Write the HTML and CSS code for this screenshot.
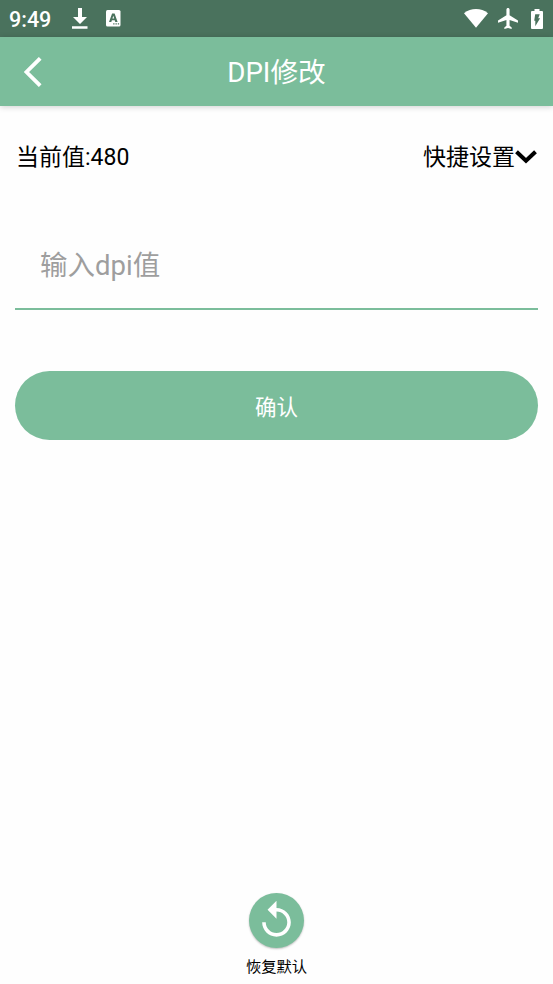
FILE: index.html
```html
<!DOCTYPE html>
<html lang="zh-CN">
<head>
  <meta charset="UTF-8">
  <meta name="viewport" content="width=device-width, initial-scale=1">
  <title>DPI修改</title>
  <link rel="stylesheet" href="styles.css">
</head>
<body>

  <div class="status-bar">
    <span class="time">9:49</span>
    <svg class="download" width="16" height="22" viewBox="0 0 16 22">
      <path d="M6 0h4v9h5l-7 7-7-7h5zM0 18.300h15.500v2.400H0z"/>
    </svg>
    <svg class="keyboard" width="15" height="17" viewBox="0 0 15 17">
      <rect width="14.500" height="16.500" rx="1.500"/>
      <path class="cutout" fill-rule="evenodd" d="M6.100 3.500h2.500l3 8.500H9.300l-.6-1.800H5.900L5.300 12H3zM7.300 5.700l-.9 2.900h1.800zM7.200 13.200h1.300v1.300H7.200zM9.500 13.200h1.300v1.300H9.500zM11.800 13.200h1.300v1.300h-1.300z"/>
    </svg>
    <div class="status-right">
      <svg width="24" height="19" viewBox="0 0 24 19">
        <path d="M0 4.200C7-1.400 17-1.400 24 4.200L12 18.700z"/>
      </svg>
      <svg width="20" height="21" viewBox="2 2 19 20">
        <path d="M21 16v-2l-8-5V3.500c0-.83-.67-1.500-1.500-1.500S10 2.670 10 3.500V9l-8 5v2l8-2.500V19l-2 1.500V22l3.500-1 3.500 1v-1.500L13 19v-5.500l8 2.500z"/>
      </svg>
      <svg width="12" height="20" viewBox="0 0 12 20">
        <path d="M3.500 0h5v2H11a1 1 0 0 1 1 1v16a1 1 0 0 1-1 1H1a1 1 0 0 1-1-1V3a1 1 0 0 1 1-1h2.500z"/>
        <path class="cutout" d="M4.200 5.200h4.500L7.200 9.300h1.900L4.300 17.300V11.700H3.200z"/>
      </svg>
    </div>
  </div>

  <header class="header">
    <svg class="back" width="18" height="30" viewBox="0 0 18 30">
      <path d="M16.200 1.300L2.500 15l13.700 13.700"/>
    </svg>
    <h1>DPI修改</h1>
  </header>

  <main class="content">
    <div class="info-row">
      <span>当前值:480</span>
      <div class="quick">
        <span>快捷设置</span>
        <svg width="22" height="14" viewBox="0 0 22 14">
          <path d="M1.500 1.700L11 10.800l9.500-9.100"/>
        </svg>
      </div>
    </div>

    <input class="dpi-input" type="text" placeholder="输入dpi值">

    <button class="confirm" type="button">确认</button>
  </main>

  <footer class="restore">
    <div class="restore-icon">
      <svg width="43" height="43" viewBox="0 0 24 24">
        <path d="M12 5V1L7 6l5 5V7c3.310 0 6 2.690 6 6s-2.690 6-6 6-6-2.690-6-6H4c0 4.420 3.580 8 8 8s8-3.580 8-8-3.580-8-8-8z"/>
      </svg>
    </div>
    <span>恢复默认</span>
  </footer>

</body>
</html>
```
FILE: styles.css
```css
:root {
  --primary-color: #7bbd9b;
  --primary-dark: #4a725d;
}

* {
  box-sizing: border-box;
}

body {
  margin: 0;
  height: 984px;
  display: flex;
  flex-direction: column;
  background: #fefefe;
  color: #000;
  font-family: Roboto, "Noto Sans CJK SC", sans-serif;
  overflow: hidden;
}

svg {
  display: block;
  flex: none;
}

.status-bar {
  height: 37px;
  display: flex;
  align-items: center;
  padding: 0 10px 0 9px;
  background: var(--primary-dark);
  color: #fff;
  fill: #fff;
}

.time {
  width: 62px;
  font-size: 21.5px;
  font-weight: 500;
  line-height: 37px;
  padding-top: 1px;
}

.download {
  margin: 1px 18px 0 1px;
}

.cutout {
  fill: var(--primary-dark);
}

.status-right {
  margin-left: auto;
  display: flex;
  align-items: center;
  gap: 10px;
}

.status-right svg:last-child {
  margin-left: 3px;
}

.header {
  height: 69px;
  display: grid;
  grid-template-columns: 44px 1fr 44px;
  align-items: center;
  background: var(--primary-color);
  color: #fff;
  box-shadow: 0 1px 6px rgba(0, 0, 0, 0.18);
}

.back {
  margin-left: 24px;
  fill: none;
  stroke: #fff;
  stroke-width: 3.8;
}

.header h1 {
  margin: 0;
  padding-top: 2px;
  text-align: center;
  font-size: 27.7px;
  font-weight: 400;
  line-height: 40px;
}

.content {
  display: flex;
  flex-direction: column;
  padding: 32px 15px 0;
}

.info-row {
  height: 40px;
  display: flex;
  justify-content: space-between;
  align-items: center;
  padding: 0 1px;
  font-size: 23px;
  line-height: 40px;
}

.quick {
  display: flex;
  align-items: center;
}

.quick svg {
  margin-bottom: 2px;
  fill: none;
  stroke: #000;
  stroke-width: 4;
}

.dpi-input {
  height: 88px;
  margin-top: 44px;
  padding: 1px 25px 0;
  border: none;
  border-bottom: 2px solid var(--primary-color);
  background: none;
  font-family: inherit;
  font-size: 27.5px;
  outline: none;
}

.dpi-input::placeholder {
  color: #9e9e9e;
}

.confirm {
  height: 69px;
  margin-top: 61px;
  padding: 0 0 1px;
  border: none;
  border-radius: 35px;
  background: var(--primary-color);
  color: #fff;
  font-family: inherit;
  font-size: 21.5px;
}

.restore {
  margin-top: auto;
  display: flex;
  flex-direction: column;
  align-items: center;
  padding-bottom: 5px;
  font-size: 15.3px;
  line-height: 24px;
}

.restore-icon {
  width: 55px;
  height: 55px;
  display: flex;
  justify-content: center;
  align-items: center;
  margin-bottom: 7px;
  border-radius: 50%;
  background: var(--primary-color);
  fill: #fff;
  box-shadow: 0 1px 2px rgba(0, 0, 0, 0.25);
}
```
